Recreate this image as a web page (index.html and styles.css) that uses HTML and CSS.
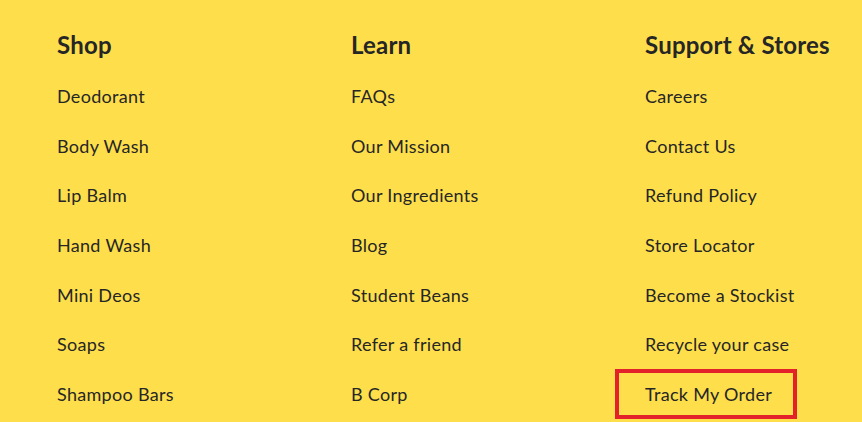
FILE: index.html
```html
<!DOCTYPE html>
<html>
<head>
<meta charset="utf-8">
<link rel="stylesheet" href="styles.css">
</head>
<body>
<footer class="footer">
  <div class="col">
    <h3 class="heading">Shop</h3>
    <ul class="links">
      <li><a href="#">Deodorant</a></li>
      <li><a href="#">Body Wash</a></li>
      <li><a href="#">Lip Balm</a></li>
      <li><a href="#">Hand Wash</a></li>
      <li><a href="#">Mini Deos</a></li>
      <li><a href="#">Soaps</a></li>
      <li><a href="#">Shampoo Bars</a></li>
    </ul>
  </div>
  <div class="col">
    <h3 class="heading">Learn</h3>
    <ul class="links">
      <li><a href="#">FAQs</a></li>
      <li><a href="#">Our Mission</a></li>
      <li><a href="#">Our Ingredients</a></li>
      <li><a href="#">Blog</a></li>
      <li><a href="#">Student Beans</a></li>
      <li><a href="#">Refer a friend</a></li>
      <li><a href="#">B Corp</a></li>
    </ul>
  </div>
  <div class="col">
    <h3 class="heading">Support &amp; Stores</h3>
    <ul class="links">
      <li><a href="#">Careers</a></li>
      <li><a href="#">Contact Us</a></li>
      <li><a href="#">Refund Policy</a></li>
      <li><a href="#">Store Locator</a></li>
      <li><a href="#">Become a Stockist</a></li>
      <li><a href="#">Recycle your case</a></li>
      <li class="highlight"><a href="#">Track My Order</a></li>
    </ul>
  </div>
</footer>
</body>
</html>
```
FILE: styles.css
```css
html, body {
  margin: 0;
  padding: 0;
  background: #fedf4b;
  height: 422px;
  overflow: hidden;
}
.footer {
  display: grid;
  grid-template-columns: 294px 294px 1fr;
  padding: 29px 0 0 57px;
  font-family: Lato, "Liberation Sans", sans-serif;
  color: #262626;
}
.heading {
  margin: 0;
  font-size: 24px;
  font-weight: 700;
  line-height: 32px;
  letter-spacing: 0.2px;
  white-space: nowrap;
}
.links {
  list-style: none;
  margin: 23px 0 0;
  padding: 0;
}
.links li {
  height: 49.7px;
  line-height: 24px;
  position: relative;
}
.links a {
  color: #262626;
  text-decoration: none;
  font-size: 18px;
  letter-spacing: 0.3px;
  white-space: nowrap;
}
.highlight::before {
  content: "";
  position: absolute;
  left: -30px;
  top: -13px;
  width: 174px;
  height: 42px;
  border: 4px solid #e3212a;
}
```
